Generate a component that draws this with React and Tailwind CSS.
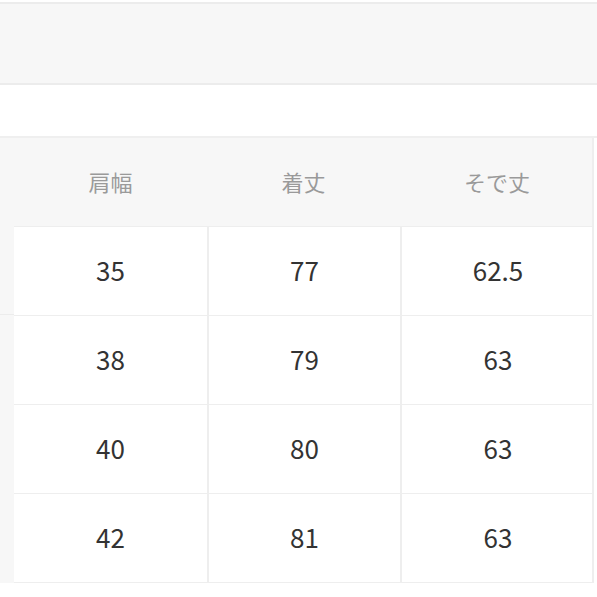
import React from "react"

const rows = [
  ["35", "77", "62.5"],
  ["38", "79", "63"],
  ["40", "80", "63"],
  ["42", "81", "63"],
]

const headers = ["肩幅", "着丈", "そで丈"]

export default function App() {
  return (
    <div
      className="w-[597px] h-[597px] bg-white overflow-hidden"
      style={{ fontFamily: '"Noto Sans CJK JP", "Noto Sans", sans-serif' }}
    >
      {/* top band */}
      <div className="h-[2px] bg-white" />
      <div className="h-[83px] bg-[#f7f7f7] border-y-2 border-[#ececec]" />
      <div className="h-[51px] bg-white" />
      <div className="h-[2px] bg-[#efefef]" />

      {/* size table */}
      <div className="flex">
        <div className="w-[14px] bg-[#f7f7f7] flex flex-col">
          <div className="h-[88px]" />
          <div className="h-[89px] border-b border-[#ececec]" />
          <div className="h-[267px]" />
        </div>
        <div className="w-[580px] border-r-2 border-[#eeeeee]">
          <div className="grid grid-cols-[193px_193px_194px] h-[88px] bg-[#f7f7f7]">
            {headers.map((h) => (
              <div key={h} className="flex items-center justify-center pb-[2px] text-[22px] text-[#9a9a9a]">
                {h}
              </div>
            ))}
          </div>
          {rows.map((r, i) => (
            <div
              key={i}
              className="grid grid-cols-[193px_193px_194px] h-[89px] border-t border-[#eeeeee] first:border-t-0"
            >
              {r.map((v, j) => (
                <div
                  key={j}
                  className={`flex items-center justify-center pb-[4px] text-[26px] text-[#333333] ${
                    j > 0 ? "border-l-2 border-[#eeeeee]" : ""
                  }`}
                >
                  {v}
                </div>
              ))}
            </div>
          ))}
          <div className="h-px bg-[#eeeeee]" />
        </div>
      </div>
    </div>
  )
}
